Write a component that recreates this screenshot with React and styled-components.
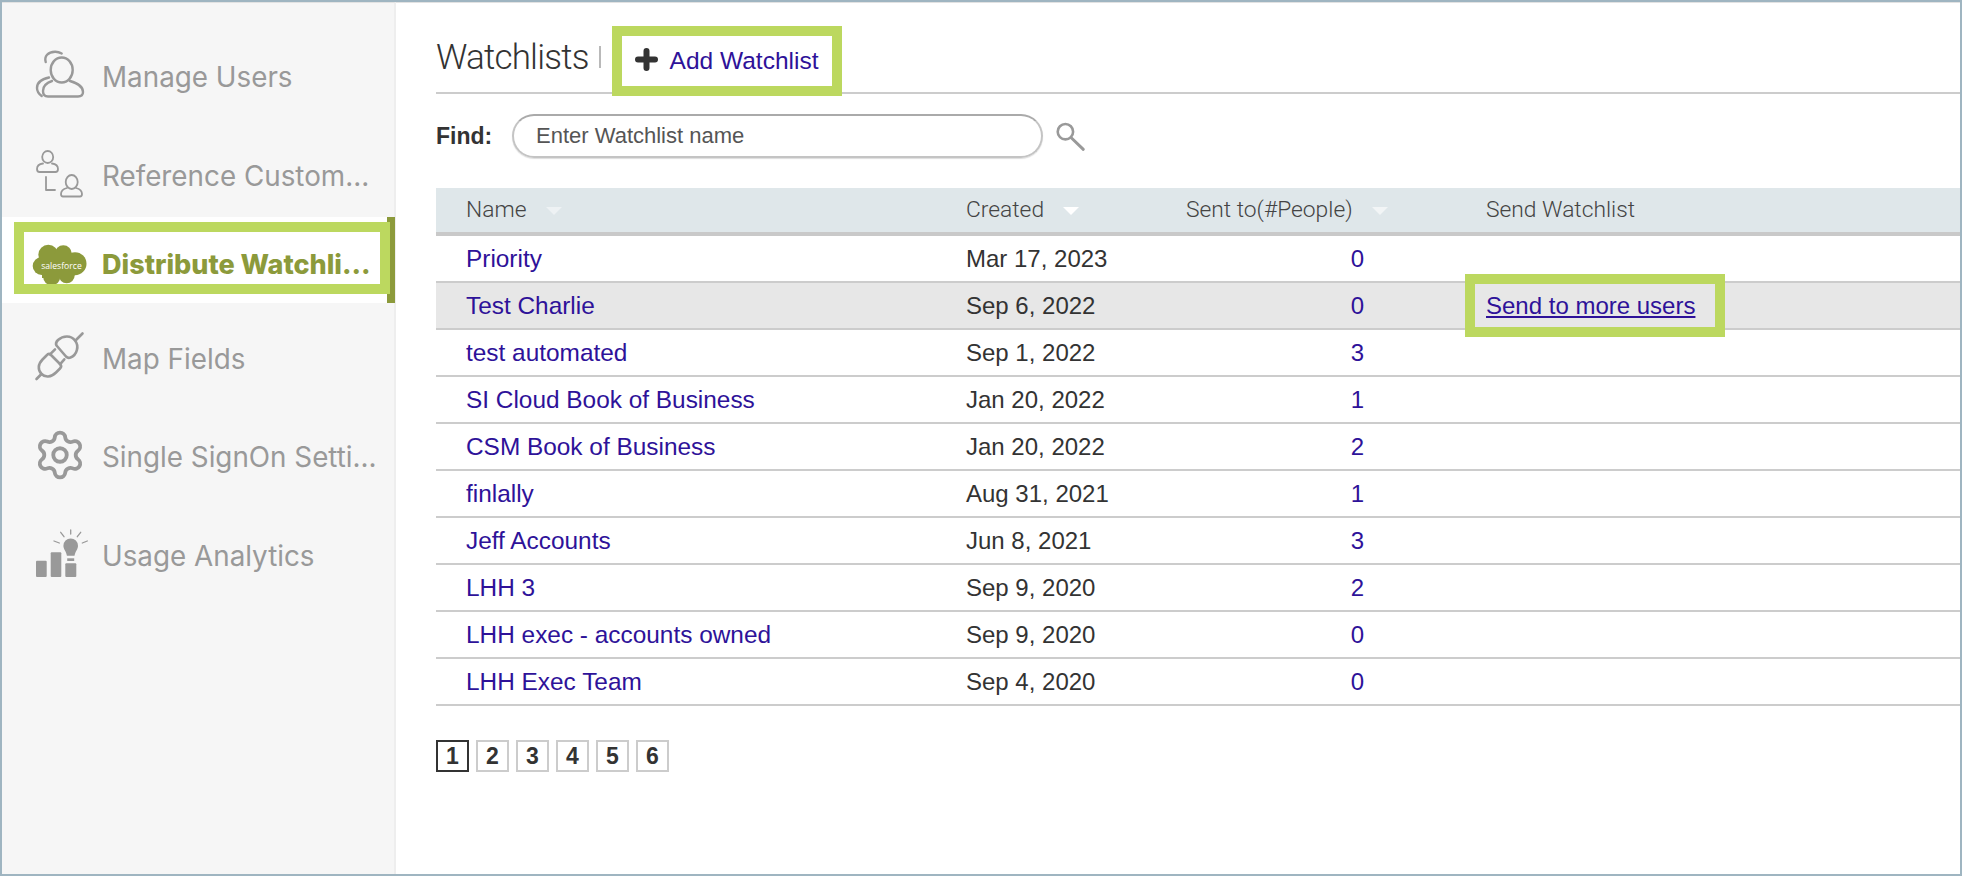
import React from 'react';
import styled, { createGlobalStyle, css } from 'styled-components';
import { Settings } from 'lucide-react';

const Global = createGlobalStyle`
  html, body { margin: 0; padding: 0; background: #fff; }
  body { font-family: "Liberation Sans", Arial, sans-serif; }
  *, *::before, *::after { box-sizing: border-box; }
`;

const Frame = styled.div`
  width: 1962px;
  height: 876px;
  border: 2px solid #9fb5c1;
  display: flex;
  overflow: hidden;
  position: relative;
`;

const Sidebar = styled.nav`
  width: 394px;
  flex: none;
  background: #f6f6f6;
  border-right: 2px solid #eeeeee;
  border-top: 1px solid #e2e2e2;
  padding-top: 39px;
  display: flex;
  flex-direction: column;
`;

const NavItem = styled.div`
  height: 70px;
  margin-top: ${p => p.$gap}px;
  padding-left: 34px;
  display: flex;
  align-items: center;
  gap: 18px;
  color: #999999;
  font-family: Inter, "Liberation Sans", sans-serif;
  font-size: 27.8px;
  position: relative;
  ${p => p.$active && css`
    height: 86px;
    margin-right: -1px;
    background: #fff;
    color: #8c9a3b;
    font-weight: 800;
    font-size: 27px;
    padding-left: 30px;
    padding-top: 9px;
    gap: 15px;
    &::before {
      content: "";
      position: absolute;
      top: 0;
      bottom: 0;
      right: 0;
      width: 8px;
      background: #8c9a3b;
    }
    &::after {
      content: "";
      position: absolute;
      left: 12px;
      top: 5px;
      width: 376px;
      height: 72px;
      border: 10px solid #bcd85f;
    }
  `}
`;

const NavLabel = styled.span`
  display: block;
  width: 277px;
  white-space: nowrap;
  overflow: hidden;
  text-overflow: ellipsis;
  line-height: 40px;
`;

const NavIcon = styled.svg`
  width: ${p => p.$w || 48}px;
  height: 48px;
  flex: none;
  fill: none;
  stroke: currentColor;
  stroke-width: ${p => p.$stroke || 2.4};
  stroke-linecap: round;
  stroke-linejoin: round;
  overflow: visible;
`;

const GearSlot = styled.span`
  width: 48px;
  height: 48px;
  flex: none;
  margin-bottom: 4px;
  display: flex;
  align-items: center;
  justify-content: center;
`;

const Main = styled.main`
  flex: 1;
  min-width: 0;
  border-top: 1px solid #e2e2e2;
  padding-left: 40px;
`;

const TitleBar = styled.header`
  height: 91px;
  border-bottom: 2px solid #cccccc;
  display: flex;
  align-items: flex-start;
`;

const Title = styled.h1`
  margin: 32px 0 0;
  font-family: Roboto, "Liberation Sans", sans-serif;
  font-weight: 300;
  font-size: 35px;
  line-height: 46px;
  color: #333;
  letter-spacing: -0.8px;
`;

const TitleRule = styled.span`
  width: 2px;
  height: 22px;
  margin: 43px 11px 0 10px;
  background: #b9b9b9;
`;

const AddBox = styled.a`
  width: 230px;
  height: 70px;
  margin-top: 23px;
  border: 10px solid #bcd85f;
  background: #fff;
  padding-left: 13px;
  display: flex;
  align-items: center;
  gap: 12px;
  font-size: 24.5px;
  color: #2e1299;
  position: relative;
`;

const PlusIcon = styled.svg`
  width: 23px;
  height: 23px;
  margin-bottom: 4px;
  flex: none;
`;

const FindRow = styled.div`
  height: 94px;
  display: flex;
  align-items: center;
  padding-bottom: 10px;
`;

const FindLabel = styled.label`
  width: 76px;
  font-size: 23px;
  font-weight: 700;
  color: #333;
`;

const FindInput = styled.div`
  width: 531px;
  height: 44px;
  border-radius: 22px;
  border: 2px solid #c4c4c4;
  border-top-color: #aaaaaa;
  padding-left: 22px;
  display: flex;
  align-items: center;
  font-size: 22px;
  color: #555;
  box-shadow: 0 1px 1px #ddd;
`;

const SearchIcon = styled.svg`
  width: 40px;
  height: 40px;
  margin-left: 7px;
  fill: none;
  stroke: #999;
  stroke-width: 2.6;
  stroke-linecap: round;
`;

const TableRow = styled.div`
  display: grid;
  grid-template-columns: 500px 220px 300px 1fr;
  align-items: center;
  height: 47px;
  padding-left: 30px;
  border-bottom: 2px solid #cccccc;
  font-size: 24px;
  color: #333;
  background: ${p => (p.$shade ? '#e7e7e7' : 'transparent')};
`;

const HeadRow = styled(TableRow)`
  height: 48px;
  padding-bottom: 2px;
  background: #dfe7ea;
  border-bottom: 4px solid #c9c9c9;
  font-family: Roboto, "Liberation Sans", sans-serif;
  font-weight: 300;
  font-size: 22.8px;
  color: #444;
`;

const HeadCell = styled.div`
  display: flex;
  align-items: center;
`;

const SortArrow = styled.span`
  width: 0;
  height: 0;
  margin-left: ${p => p.$gap}px;
  margin-top: 4px;
  border-left: 8px solid transparent;
  border-right: 8px solid transparent;
  border-top: 8px solid ${p => p.$color};
`;

const RowLink = styled.a`
  color: #2e1299;
  font-size: 24.4px;
`;

const Count = styled.a`
  display: block;
  width: 178px;
  text-align: right;
  color: #2e1299;
`;

const SendLink = styled.a`
  color: #2e1299;
  text-decoration: underline;
  position: relative;
  justify-self: start;
  &::after {
    content: "";
    position: absolute;
    left: -21px;
    right: -30px;
    top: -18px;
    bottom: -17px;
    border: 10px solid #bcd85f;
  }
`;

const Pager = styled.div`
  display: flex;
  gap: 7px;
  margin-top: 34px;
`;

const PageBox = styled.span`
  width: 33px;
  height: 32px;
  border: 2px solid ${p => (p.$current ? '#333' : '#cccccc')};
  display: flex;
  align-items: center;
  justify-content: center;
  font-size: 23px;
  font-weight: 700;
  color: #333;
`;

const rows = [
  ['Priority', 'Mar 17, 2023', 0],
  ['Test Charlie', 'Sep 6, 2022', 0, true],
  ['test automated', 'Sep 1, 2022', 3],
  ['SI Cloud Book of Business', 'Jan 20, 2022', 1],
  ['CSM Book of Business', 'Jan 20, 2022', 2],
  ['finlally', 'Aug 31, 2021', 1],
  ['Jeff Accounts', 'Jun 8, 2021', 3],
  ['LHH 3', 'Sep 9, 2020', 2],
  ['LHH exec - accounts owned', 'Sep 9, 2020', 0],
  ['LHH Exec Team', 'Sep 4, 2020', 0],
];

const UsersIcon = () => (
  <NavIcon viewBox="0 3 48 48">
    <ellipse cx="25.700" cy="20" rx="11" ry="12.500" />
    <path d="M9.700 12C8 6 12 2 19 1.700c3-.1 5 .8 6.700 1.800" />
    <path d="M13 27.500C6 29 1 32 1 38c0 3 2 6 4.700 8" />
    <path d="M16 31c-6 2-9 6-9 10 0 3.500 2 5.500 5 5.500h30c3.500 0 5-2 5-4.500 0-5-6-9-13-11" />
  </NavIcon>
);

const ReferenceIcon = () => (
  <NavIcon viewBox="0 2 48 48" $stroke={1.8}>
    <ellipse cx="11.700" cy="7" rx="5.500" ry="6" />
    <path d="M7 13.500C3 14 1 16 1 19c0 2 .8 3 2.500 3h16c2 0 2.500-1 2.500-3 0-3-2-5-6-5.500" />
    <path d="M10 27v13h9" />
    <ellipse cx="35.700" cy="32" rx="6" ry="7" />
    <path d="M31 38c-4 1-6 3-6 6 0 1.500.7 2.500 2 2.500h17c1.500 0 2-1 2-2.500 0-3-2-5-6-6" />
  </NavIcon>
);

const CloudIcon = () => (
  <svg viewBox="0 0 55 42" width="55" height="42" style={{ flex: 'none' }}>
    <g fill="#8c9a3b">
      <circle cx="9.700" cy="22" r="9" />
      <circle cx="16.300" cy="10.700" r="10" />
      <circle cx="31.300" cy="9.700" r="8.500" />
      <circle cx="43" cy="19.700" r="11.500" />
      <circle cx="34.700" cy="31.300" r="8" />
      <circle cx="19.700" cy="33" r="8.500" />
      <rect x="10" y="10" width="32" height="24" />
    </g>
    <text x="29.500" y="24.500" textAnchor="middle" fontSize="8.600" fill="#fff" fontFamily="'Open Sans', sans-serif" fontWeight="400">salesforce</text>
  </svg>
);

const PlugIcon = () => (
  <NavIcon viewBox="0 2 48 48" $stroke={2.6}>
    <path d="M20.500 12.500L30 23.500q2 2 4.500 1C41 22 43.500 13 39 7.500 35 2 27 2.500 22 7q-3 3-1.500 5.500z" />
    <path d="M39.500 7.500l7-7" />
    <path d="M14.500 21.500l10 10q1.500 2-.5 4l-4 4c-5 5-11 5-14.500 1.500C1.500 37 2 31 6.500 26.500l4-4q2-2.500 4-1z" />
    <path d="M5.500 41l-5 5M14 21.300l5-5M24 31.300l4.300-5" />
  </NavIcon>
);

const AnalyticsIcon = () => (
  <NavIcon viewBox="0 0 52 48" $w={52} $stroke={1.3} style={{ marginRight: -4 }}>
    <g fill="currentColor" stroke="none">
      <rect x="0" y="28.700" width="10.700" height="16.300" rx="1" />
      <rect x="14.700" y="20.300" width="10.600" height="24.700" rx="1" />
      <rect x="29.300" y="31.300" width="11" height="13.700" rx="1" />
      <path d="M34.700 6.400a7.300 7.300 0 0 1 7.300 7.300c0 3.500-2.500 5-3.500 10h-7.600c-1-5-3.500-6.500-3.500-10a7.300 7.300 0 0 1 7.300-7.300z" />
      <rect x="31.200" y="26.300" width="7" height="2.700" />
    </g>
    <path d="M34.700-2v4M24.700.3L28 4.700M44.700.3L41.300 4.700M18 9l5.300 2M51.300 9L46.300 11" />
  </NavIcon>
);

const GearIcon = () => (
  <GearSlot>
    <Settings size={54} strokeWidth={1.7} style={{ flex: 'none' }} />
  </GearSlot>
);

const nav = [
  { label: 'Manage Users', icon: <UsersIcon />, gap: 0 },
  { label: 'Reference Customers', icon: <ReferenceIcon />, gap: 29 },
  { label: 'Distribute Watchlists', icon: <CloudIcon />, gap: 6, active: true },
  { label: 'Map Fields', icon: <PlugIcon />, gap: 21 },
  { label: 'Single SignOn Settings', icon: <GearIcon />, gap: 28 },
  { label: 'Usage Analytics', icon: <AnalyticsIcon />, gap: 29 },
];

export default function App() {
  return (
    <Frame>
      <Global />
      <Sidebar>
        {nav.map(n => (
          <NavItem key={n.label} $gap={n.gap} $active={n.active}>
            {n.icon}
            <NavLabel>{n.label}</NavLabel>
          </NavItem>
        ))}
      </Sidebar>
      <Main>
        <TitleBar>
          <Title>Watchlists</Title>
          <TitleRule />
          <AddBox>
            <PlusIcon viewBox="0 0 23 23">
              <path d="M11.500 3v17M3 11.500h17" stroke="#333" strokeWidth="6" strokeLinecap="round" />
            </PlusIcon>
            Add Watchlist
          </AddBox>
        </TitleBar>
        <FindRow>
          <FindLabel>Find:</FindLabel>
          <FindInput>Enter Watchlist name</FindInput>
          <SearchIcon viewBox="0 0 40 40">
            <circle cx="15.400" cy="15.700" r="7.700" />
            <path d="M21.500 22L33.300 33.300" strokeWidth="3" />
          </SearchIcon>
        </FindRow>
        <HeadRow>
          <HeadCell>Name<SortArrow $gap={20} $color="#eef2f4" /></HeadCell>
          <HeadCell>Created<SortArrow $gap={19} $color="#ffffff" /></HeadCell>
          <HeadCell>Sent to(#People)<SortArrow $gap={19} $color="#f2f5f6" /></HeadCell>
          <HeadCell>Send Watchlist</HeadCell>
        </HeadRow>
        {rows.map(([name, date, count, shade]) => (
          <TableRow key={name} $shade={shade}>
            <RowLink>{name}</RowLink>
            <span>{date}</span>
            <Count>{count}</Count>
            {shade ? <SendLink>Send to more users</SendLink> : <span />}
          </TableRow>
        ))}
        <Pager>
          {[1, 2, 3, 4, 5, 6].map(n => (
            <PageBox key={n} $current={n === 1}>{n}</PageBox>
          ))}
        </Pager>
      </Main>
    </Frame>
  );
}
